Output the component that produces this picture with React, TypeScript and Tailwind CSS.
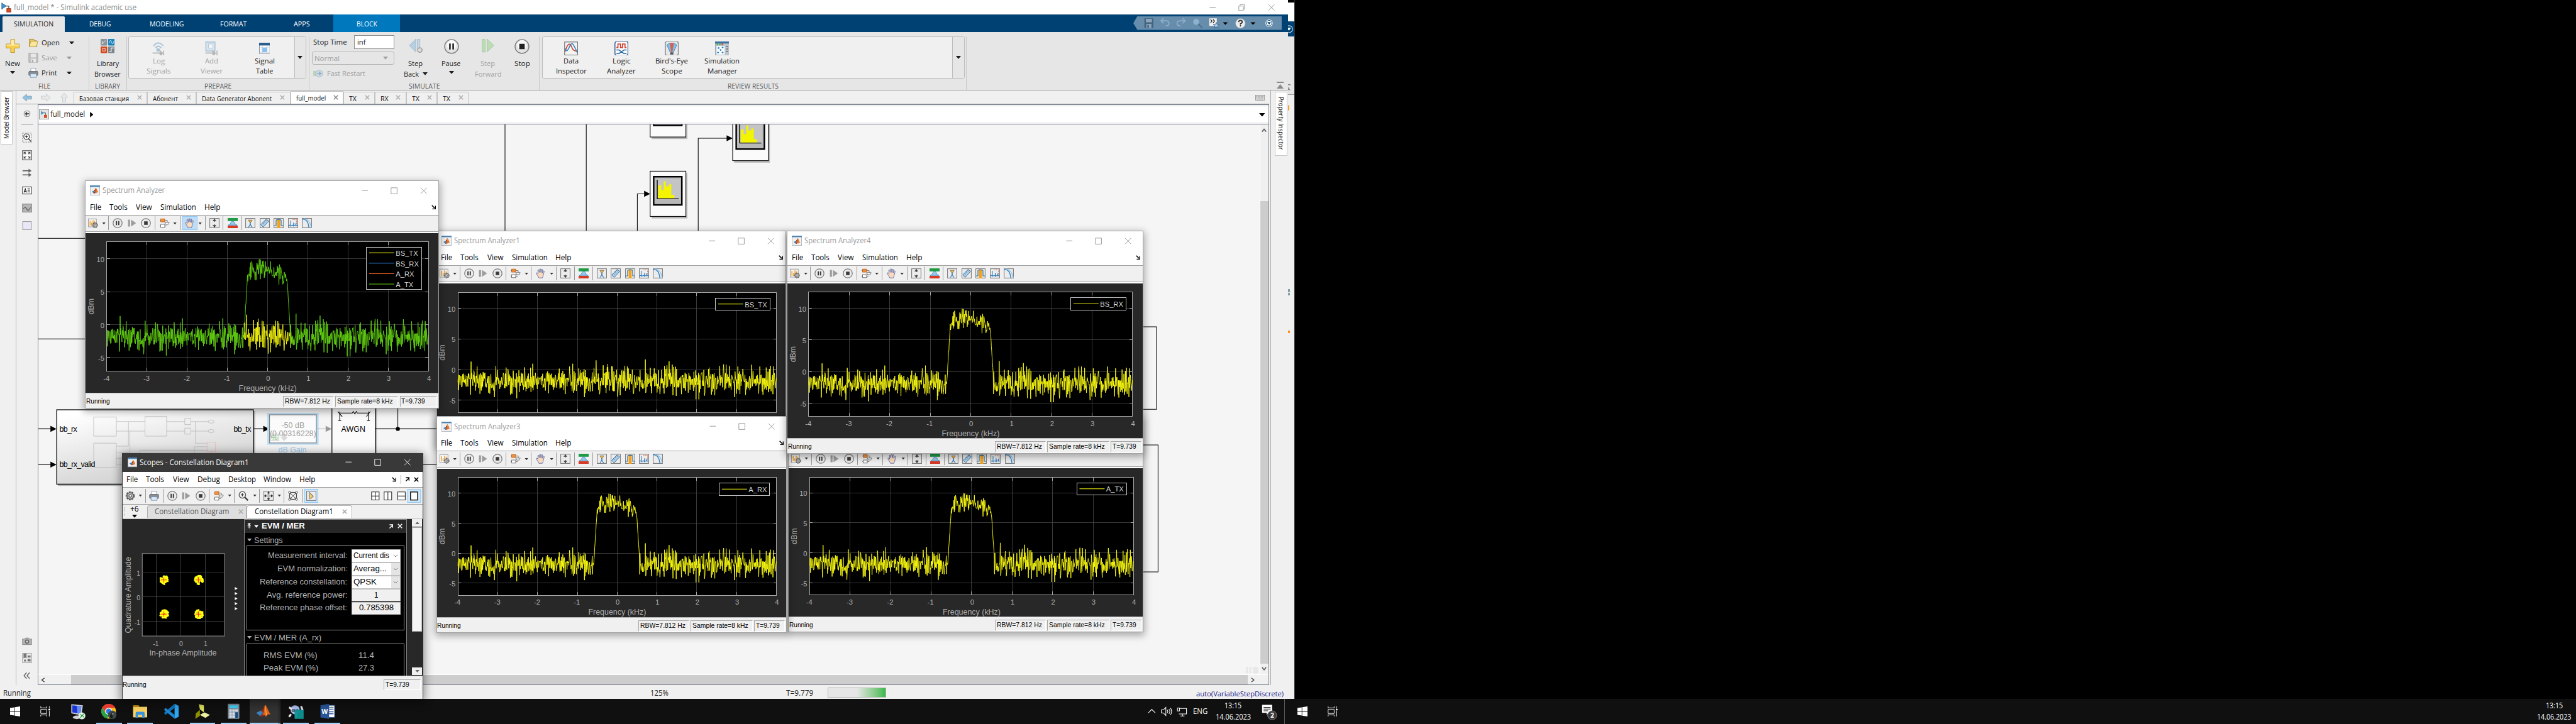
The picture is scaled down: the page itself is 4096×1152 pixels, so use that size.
import React, { useLayoutEffect, useRef } from "react";

/* ---------- text fitted to a fixed advance width ---------- */
function T({ c, v, children }: { c: string; v?: boolean; children: React.ReactNode }) {
  const outer = useRef<HTMLSpanElement>(null);
  const inner = useRef<HTMLSpanElement>(null);
  useLayoutEffect(() => {
    const o = outer.current;
    const i = inner.current;
    if (!o || !i) return;
    i.style.transform = "none";
    const a = i.getBoundingClientRect();
    const b = o.getBoundingClientRect();
    const natural = v ? a.height : a.width;
    const wanted = v ? b.height : b.width;
    if (natural > 0) i.style.transform = `scaleX(${wanted / natural})`;
  });
  return (
    <span ref={outer} className={`block shrink-0 whitespace-nowrap ${c}`}>
      <span ref={inner} className="inline-block origin-left">
        {children}
      </span>
    </span>
  );
}

/* ---------- small drawing helpers ---------- */
type K = { c?: string; children?: React.ReactNode };
const Svg = ({ c = "", children }: K) => (
  <svg viewBox="0 0 20 20" className={`block size-5 shrink-0 ${c}`}>
    {children}
  </svg>
);
const Tri = ({ c = "" }: K) => (
  <svg viewBox="0 0 10 6" className={`block h-[6px] w-[10px] shrink-0 fill-current ${c}`}>
    <path d="M0 0h10L5 6z" />
  </svg>
);
const Sep = ({ c = "" }: K) => <div className={`h-[27px] w-px shrink-0 bg-[#9a9a9a] ${c}`} />;

const MatlabMark = () => (
  <>
    <path d="M1 12l6-3 3 3-4 4z" fill="#3d7fb8" />
    <path d="M6 16l4-4-3-3c2-1 4-6 5-7l3 6-5 8-2 1z" fill="#8c2a1a" />
    <path d="M12 2c2 0 4 8 7 12-3-1-4 0-6 3-1-2-2-3-4-2 2-4 2-11 3-13z" fill="#e2621b" />
    <path d="M12 3c1 4 1 8 2 12" stroke="#f7b545" strokeWidth="1" fill="none" />
  </>
);
const WinLogo = ({ c = "" }: K) => (
  <Svg c={c}>
    <rect x=".5" y=".5" width="19" height="19" fill="#f0f0f0" stroke="#a8b0b8" />
    <rect x="0" y="0" width="20" height="3" fill="#4e86b4" />
    <g transform="translate(3 4) scale(.72)">
      <MatlabMark />
    </g>
  </Svg>
);
const SimLogo = ({ c = "" }: K) => (
  <Svg c={c}>
    <path d="M1 1l9 6-9 6z" fill="#3f97cf" stroke="#1f618f" />
    <path d="M10 7h5v5" stroke="#333" fill="none" strokeWidth="1.4" />
    <rect x="11" y="12" width="8" height="7" fill="#d64a22" stroke="#8b2c10" />
  </Svg>
);
const PauseI = ({ c = "" }: K) => (
  <Svg c={c}>
    <circle cx="10" cy="10" r="9" fill="#ececec" stroke="#7c7c7c" strokeWidth="1.6" />
    <path d="M6.5 6h2.4v8H6.5zM11 6h2.4v8H11z" fill="#3a3a3a" />
  </Svg>
);
const StopI = ({ c = "" }: K) => (
  <Svg c={c}>
    <circle cx="10" cy="10" r="9" fill="#ececec" stroke="#7c7c7c" strokeWidth="1.6" />
    <rect x="6.5" y="6.5" width="7" height="7" fill="#3a3a3a" />
  </Svg>
);
const StepI = ({ c = "" }: K) => (
  <Svg c={c}>
    <path d="M2 3h4v14H2zM8 3l10 7-10 7z" fill="#9c9c9c" />
  </Svg>
);
const BlocksI = ({ c = "" }: K) => (
  <Svg c={c}>
    <rect x="2" y="1.500" width="8" height="6" fill="#f0903a" stroke="#b75b12" />
    <path d="M0 4.500h2M10 4.500h5v4M14 15.500h-4M2 15.500H0" stroke="#555" fill="none" />
    <path d="M10 8.500h9l-2 4h-5z" fill="#fff" stroke="#555" />
    <rect x="2" y="12.500" width="8" height="6" fill="#fff" stroke="#555" />
  </Svg>
);
const HandI = () => (
  <Svg>
    <path
      d="M6 19C5 15 1 12 1 9.500c0-1.500 2-1 3.500 1.500L4 4c0-1.600 1.800-1.600 2 0l.8 4L7.500 2c.1-1.600 2-1.600 2.100 0l.4 6 1.200-5.500c.3-1.500 2-1.200 1.900.2L12.600 9l2.200-3.500c.8-1.300 2.300-.5 1.800 1L15 12.500c-.5 3-1 4-2 6.500z"
      fill="#fbd9bc"
      stroke="#5468a8"
      strokeWidth="1.100"
    />
  </Svg>
);
const Gear = ({ x, y, s = 1 }: { x: number; y: number; s?: number }) => (
  <g transform={`translate(${x} ${y}) scale(${s})`}>
    <circle r="4.800" fill="#b9b9b9" stroke="#5b5b5b" strokeWidth="1.600" strokeDasharray="2.2 1.200" />
    <circle r="3.800" fill="#c9c9c9" stroke="#666" />
    <circle r="1.600" fill="#fff" stroke="#555" />
  </g>
);
const ConfigI = ({ c = "" }: K) => (
  <Svg c={c}>
    <rect x=".5" y="1.500" width="16" height="16" fill="#f5f5f5" stroke="#8a8a8a" />
    <path d="M4 15V5M7 15V9M10 15V4M13 9V6" stroke="#f0a030" strokeWidth="1.800" />
    <Gear x={14} y={14} />
  </Svg>
);
const Framed = ({ c = "", children }: K) => (
  <Svg c={c}>
    <rect x=".75" y=".75" width="18.500" height="18.500" fill="#ececec" stroke="#777" strokeWidth="1.300" />
    {children}
  </Svg>
);
const PrinterI = ({ c = "" }: K) => (
  <Svg c={c}>
    <path d="M5 8V1h10v7" fill="#fff" stroke="#7a8ea5" />
    <rect x="1" y="7" width="18" height="8" rx="1.500" fill="#8a8f96" stroke="#55595f" />
    <path d="M4 12h12v7H4z" fill="#d8e9f8" stroke="#6c89a8" />
  </Svg>
);
const DockI = ({ c = "" }: K) => (
  <svg viewBox="0 0 10 10" className={`block size-[9px] shrink-0 ${c}`}>
    <path d="M1 1l6 6M9 2v7H2" stroke="currentColor" strokeWidth="2.200" fill="none" />
  </svg>
);
const UndockI = ({ c = "" }: K) => (
  <svg viewBox="0 0 10 10" className={`block size-[9px] shrink-0 ${c}`}>
    <path d="M2 9l6-6M2 1.500h7V8" stroke="currentColor" strokeWidth="2" fill="none" />
  </svg>
);
const XI = ({ c = "" }: K) => (
  <svg viewBox="0 0 10 10" className={`block shrink-0 ${c}`}>
    <path d="M1 1l8 8M9 1l-8 8" stroke="currentColor" strokeWidth="2" fill="none" />
  </svg>
);

const WinButtons = ({ c = "" }: K) => (
  <svg viewBox="0 0 130 14" className={`block h-[14px] w-[130px] shrink-0 ${c}`} fill="none" stroke="currentColor" strokeWidth="1.100">
    <path d="M.5 6.500h12M58.500 1h12v12h-12zM117.500 1l12 12M129.500 1l-12 12" />
  </svg>
);

/* ---------- spectrum data ---------- */
const N = 900;
let seed = 20230614;
const rnd = () => {
  seed = (seed * 1664525 + 1013904223) % 4294967296;
  return seed / 4294967296;
};
const PEAKS: [number, number][] = [
  [-3.67, 1.3], [-3.52, 0.5], [-2.12, 0.95], [-2.18, 0.3], [-1.12, 0.95], [-1.2, 0.5], [-0.53, 1.5], [-0.35, 0.7], [-0.24, 0.9],
  [0.19, 0.6], [0.25, 0.5], [0.71, 1.65], [0.93, 0.2], [1.3, 1.35], [2.58, 0.6], [2.67, 0.85], [2.74, 0.8], [2.82, 0.6], [3.03, 0.5],
  [3.38, 0.8], [3.58, 0.5], [3.85, 0.6], [-3.69, -4.1], [-3.08, -4.5], [-2.52, -4.7], [-1.3, -4], [-0.82, -4.5], [0.01, -4.4],
  [0.08, -4.2], [1.07, -4], [1.4, -4.2], [1.48, -4.3], [1.98, -4.85], [2.05, -4.85], [2.45, -4.2], [2.95, -4.5], [3.08, -4], [3.66, -4.1],
];
const FREQ = Array.from({ length: N }, (_, i) => -4 + (8 * i) / (N - 1));
const NOISE = FREQ.map(() => {
  const g = rnd() + rnd() + rnd() - 1.5;
  return -1.85 + g * 1.95;
});
PEAKS.forEach(([f, v]) => {
  NOISE[Math.round(((f + 4) / 8) * (N - 1))] = v;
});
const BUMP = FREQ.map((f, i) => {
  const a = Math.abs(f + 0.01);
  if (a > 0.575) return NOISE[i];
  const j = (rnd() + rnd() - 1) * 1.9;
  if (a > 0.5) return 6.4 - ((a - 0.5) / 0.075) * 7.5 + j * 0.3;
  if (a > 0.42) return 8 - ((a - 0.42) / 0.08) * 1.3 + j * 0.7;
  return 8.3 - (f > 0.1 ? 0.7 : 0) + j;
});

type Plot = { x0: number; x1: number; y0: number; y1: number; zero: number; unit: number };
type Series = "flat" | "bump" | "all";

function Spectrum({ box, p, series, legend, lx, ly, labels = true }: {
  box: [number, number, number, number];
  p: Plot;
  series: Series;
  legend: [string, string][];
  lx: [number, number];
  ly: [number, number];
  labels?: boolean;
}) {
  const X = (f: number) => p.x0 + ((f + 4) / 8) * (p.x1 - p.x0);
  const Y = (v: number) => p.zero - v * p.unit;
  const line = (d: number[], lo = -5, hi = 5) =>
    FREQ.map((f, i) => (f >= lo && f <= hi ? `${X(f).toFixed(1)},${Y(d[i]).toFixed(1)}` : "")).filter(Boolean).join(" ");
  const step = (ly[1] - ly[0]) / legend.length;
  return (
    <svg viewBox={box.join(" ")} preserveAspectRatio="none" className="block h-full w-full font-['Liberation_Sans',sans-serif]">
      <rect x={p.x0} y={p.y0} width={p.x1 - p.x0} height={p.y1 - p.y0} fill="#000" />
      <g stroke="#484848" strokeWidth="1" shapeRendering="crispEdges">
        {[-3, -2, -1, 0, 1, 2, 3].map((f) => <path key={f} d={`M${X(f)} ${p.y0}V${p.y1}`} />)}
        {[-5, 0, 5, 10].map((v) => <path key={v} d={`M${p.x0} ${Y(v)}H${p.x1}`} />)}
      </g>
      <g stroke="#afafaf" strokeWidth="1.200" fill="none" shapeRendering="crispEdges">
        <rect x={p.x0} y={p.y0} width={p.x1 - p.x0} height={p.y1 - p.y0} />
        {[-3, -2, -1, 0, 1, 2, 3].map((f) => <path key={f} d={`M${X(f)} ${p.y0}v7M${X(f)} ${p.y1}v-7`} />)}
        {[-5, 0, 5, 10].map((v) => <path key={v} d={`M${p.x0} ${Y(v)}h6M${p.x1} ${Y(v)}h-6`} />)}
      </g>
      {series === "all" && <polyline points={line(NOISE, -0.62, 0.62)} fill="none" stroke="#ffff11" strokeWidth="1.150" />}
      {series === "all" ? (
        <polyline points={line(BUMP)} fill="none" stroke="#64d413" strokeWidth="1.150" />
      ) : (
        <polyline points={line(series === "flat" ? NOISE : BUMP)} fill="none" stroke="#ffff11" strokeWidth="1.150" />
      )}
      <g fill="#afafaf" fontSize="14">
        {[-5, 0, 5, 10].map((v) => <text key={v} x={p.x0 - 5} y={Y(v) + 6.500} textAnchor="end">{v}</text>)}
        {labels && [-4, -3, -2, -1, 0, 1, 2, 3, 4].map((f) => (
          <text key={f} x={X(f) + (f < 0 ? -1 : 1)} y={p.y1 + 19} textAnchor="middle">{f}</text>
        ))}
        {labels && (
          <text x={(p.x0 + p.x1) / 2} y={p.y1 + 39} fontSize="15.500" textAnchor="middle" textLength="115" lengthAdjust="spacingAndGlyphs">
            Frequency (kHz)
          </text>
        )}
        <text transform={`translate(${p.x0 - 26} ${(p.y0 + p.y1) / 2}) rotate(-90)`} fontSize="15.500" textAnchor="middle">dBm</text>
      </g>
      <rect x={lx[0]} y={ly[0]} width={lx[1] - lx[0]} height={ly[1] - ly[0]} fill="#000" stroke="#e0e0e0" strokeWidth="1.100" shapeRendering="crispEdges" />
      {legend.map(([name, color], i) => {
        const y = ly[0] + step * (i + 0.5);
        return (
          <g key={name}>
            <path d={`M${lx[0] + 5.500} ${y}h50`} stroke={color} strokeWidth="1.250" />
            <text x={lx[0] + 58.500} y={y + 6} fontSize="14" fill="#d4d4d4">{name}</text>
          </g>
        );
      })}
    </svg>
  );
}

const Cell = ({ c, children }: { c: string; children: React.ReactNode }) => (
  <div className={`flex h-[22px] shrink-0 items-center border border-[#a9a9a9] border-r-white border-b-white pl-[2px] ${c}`}>{children}</div>
);

/* A window without a title shows an empty header; one without cells shows an empty status bar. */
function SpectrumWindow({ place, title, tw = "", hot, cells, children }: {
  place: string;
  title?: string;
  tw?: string;
  hot?: boolean;
  cells?: [string, string, string];
  children: React.ReactNode;
}) {
  return (
    <div className={`absolute flex flex-col border border-[#a2a2a2] bg-white shadow-[0_4px_14px_2px_rgba(0,0,0,0.32)] ${place}`}>
      <div className="flex h-[35px] shrink-0 items-center pt-[3px] pl-[9px] text-[15px] leading-none text-[#999]">
        {title && (
          <>
            <WinLogo />
            <T c={`ml-[5px] ${tw}`}>{title}</T>
            <WinButtons c="ml-auto mr-[23px] text-[#8f8f8f]" />
          </>
        )}
      </div>
      <div className="flex h-[33px] shrink-0 items-center border-b border-[#a0a0a0] pt-[2px] pl-[8px] text-[15px] leading-none text-black">
        {title && (
          <>
            <T c="w-[23px]">File</T>
            <T c="ml-[16px] w-[36px]">Tools</T>
            <T c="ml-[17px] w-[32px]">View</T>
            <T c="ml-[17px] w-[71px]">Simulation</T>
            <T c="ml-[16px] w-[32px]">Help</T>
            <DockI c="ml-auto mr-[5px]" />
          </>
        )}
      </div>
      <div className="flex h-[33px] shrink-0 items-center border-b border-[#a0a0a0] bg-[#f0f0f0] pl-[5px] text-[#333]">
        <ConfigI />
        <Tri c="ml-[7px] w-[8px]! h-[4px]!" />
        <Sep c="ml-[5px]" />
        <PauseI c="ml-[8px]" />
        <StepI c="ml-[8px]" />
        <StopI c="ml-[8px]" />
        <Sep c="ml-[7px]" />
        <BlocksI c="ml-[9px]" />
        <Tri c="ml-[7px] w-[8px]! h-[4px]!" />
        <Sep c="ml-[5px]" />
        <div className={`ml-[4px] flex h-[27px] w-[30px] shrink-0 items-center justify-center ${hot ? "border border-[#90c8f6] bg-[#bfdcf4]" : ""}`}>
          <HandI />
        </div>
        <Tri c="ml-[2px] w-[8px]! h-[4px]!" />
        <Sep c="ml-[5px]" />
        <Framed c="ml-[8px]">
          <path d="M10 1.500v6M10 12.500v6" stroke="#333" strokeWidth="1.500" />
          <path d="M6 6l4-4.500L14 6zM6 14l4 4.500 4-4.500z" fill="#444" />
        </Framed>
        <Sep c="ml-[7px]" />
        <Svg c="ml-[8px]">
          <rect width="20" height="7" fill="#1f9a45" />
          <rect y="6" width="20" height="9" fill="#eef4f8" />
          <path d="M1 14c5 0 5-8 9-8s4 8 9 8z" fill="#9cc7e8" stroke="#3a7db0" />
          <rect y="15" width="20" height="5" fill="#d83a26" />
        </Svg>
        <Sep c="ml-[7px]" />
        <Framed c="ml-[8px]">
          <path d="M6 4h8l-4 6z" fill="#f2b233" stroke="#555" strokeWidth=".8" />
          <path d="M10 8c0 5-1 8-4 10M10 8c0 5 1 8 4 10" stroke="#3c7fb5" fill="none" strokeWidth="1.500" />
        </Framed>
        <Framed c="ml-[8px]">
          <path d="M2 13L13 2l5 4L7 18z" fill="#a9d0ee" stroke="#41678a" strokeWidth="1.200" />
          <path d="M6 10l2 2M9 7l2 2M12 4l2 2" stroke="#2d4f6e" />
        </Framed>
        <Framed c="ml-[8px]">
          <rect x="7" y="2" width="6" height="18" fill="#f5a21b" />
          <path d="M1 15h4V5c0-2 3-2 5-2s5 0 5 2v10h4" stroke="#2d6ea5" fill="none" strokeWidth="1.500" />
        </Framed>
        <Framed c="ml-[8px]">
          <path d="M1 15l2-1 2 2V5v9l2 1 2-1 2 2V9l1 6 3-1 1-4v5l3-1" stroke="#2d7bbd" fill="none" strokeWidth="1.300" />
          <path d="M9 3h8v9" stroke="#d8492c" fill="none" strokeDasharray="2 1.500" />
        </Framed>
        <Framed c="ml-[8px]">
          <path d="M1 2c8 0 12 7 13 17" stroke="#2f82c4" fill="none" strokeWidth="1.800" />
          <path d="M4 1c8 1 13 8 15 18" stroke="#8fbfe4" fill="none" strokeWidth="1.500" />
        </Framed>
      </div>
      <div className="h-[2px] shrink-0 bg-white" />
      <div className="min-h-0 flex-1 bg-[#282828]">{children}</div>
      <div className="flex h-[30px] shrink-0 items-center border-t-2 border-[#b8b8b8] bg-[#f0f0f0] pt-[3px] pl-px pr-[3px] font-['Liberation_Sans',sans-serif] text-[14px] leading-none text-black">
        {cells && (
          <>
            <T c="w-[47px]">Running</T>
            <Cell c={`ml-auto ${cells[0]}`}><T c="w-[90px]">RBW=7.812 Hz</T></Cell>
            <Cell c={`ml-[3px] ${cells[1]}`}><T c="w-[111px]">Sample rate=8 kHz</T></Cell>
            <Cell c={`ml-[3px] ${cells[2]}`}><T c="w-[47px]">T=9.739</T></Cell>
          </>
        )}
      </div>
    </div>
  );
}

/* ---------- ribbon ---------- */
const Tall = ({ c, icon, children }: { c: string; icon: React.ReactNode; children: React.ReactNode }) => (
  <div className={`flex shrink-0 flex-col items-center leading-none ${c}`}>
    <div className="flex h-[30px] items-center">{icon}</div>
    {children}
  </div>
);
const Section = ({ c, label, children }: { c: string; label: React.ReactNode; children?: React.ReactNode }) => (
  <div className={`flex shrink-0 flex-col ${c}`}>
    <div className="mt-[8px] flex h-[92px] shrink-0 border-r border-[#c9c9c9]">{children}</div>
    <div className="flex h-[15px] items-center justify-center border-r border-[#c9c9c9] text-[13px] leading-none text-[#5c5c5c]">{label}</div>
  </div>
);
const Ico = ({ c = "", children }: K) => (
  <svg viewBox="0 0 28 28" className={`block size-7 shrink-0 ${c}`}>{children}</svg>
);
const RoundBtn = ({ pause }: { pause?: boolean }) => (
  <Ico c="size-[30px]!">
    <circle cx="14" cy="14" r="12.800" fill="#e4e4e4" stroke="#858585" strokeWidth="1.800" />
    <circle cx="14" cy="11" r="9" fill="#fafafa" />
    {pause ? <path d="M9.500 8.500h3v11h-3zM15.500 8.500h3v11h-3z" fill="#222" /> : <rect x="9" y="9" width="10" height="10" fill="#222" />}
  </Ico>
);

function Ribbon() {
  return (
    <div className="flex h-[116px] shrink-0 border-b border-[#a3a3a3] bg-[#e6e6e6] text-[14.5px] text-[#1c1c1c]">
      <Section c="w-[177px]" label={<T c="w-[24px]">FILE</T>}>
        <Tall c="ml-[5px] mt-[5px] w-[40px]" icon={<Ico><path d="M10 1h8v9h9v8h-9v9h-8v-9H1v-8h9z" fill="#f7cf4d" stroke="#b58a1c" /><path d="M11 2h6v9h9v2H2v-2h9z" fill="#fdeeb0" /></Ico>}>
          <T c="mt-[12px] w-[30px]">New</T>
          <Tri c="mt-[8px]" />
        </Tall>
        <div className="ml-[11px] mt-[-2px] flex flex-col leading-none">
          <div className="flex h-[30px] items-center">
            <Svg><path d="M2 3h9l1 3h5v12H2z" fill="#e9c565" stroke="#a3812d" /><path d="M5 7h14l-3 11H2z" fill="#fbe79b" stroke="#b08f38" /></Svg>
            <T c="ml-[7px] w-[36px]">Open</T>
            <Tri c="ml-[19px]" />
          </div>
          <div className="flex h-[30px] items-center text-[#9a9a9a]">
            <Svg><path d="M1 1h18v18H1z" fill="#c3c3c3" stroke="#a0a0a0" /><path d="M5 2h10v7H5zM5 12h10v7H5z" fill="#e8e8e8" /><path d="M7 14h3v5H7z" fill="#a8a8a8" /></Svg>
            <T c="ml-[7px] w-[31px]">Save</T>
            <Tri c="ml-[18px]" />
          </div>
          <div className="flex h-[30px] items-center">
            <PrinterI />
            <T c="ml-[7px] w-[31px]">Print</T>
            <Tri c="ml-[19px]" />
          </div>
        </div>
      </Section>
      <Section c="w-[75px]" label={<T c="w-[50px]">LIBRARY</T>}>
        <Tall c="mx-auto mt-[5px]" icon={
          <Ico>
            <rect x="0" y="0" width="13" height="13" rx="1" fill="#8c949b" /><path d="M3 10V4M3 10l7-7" stroke="#fff" fill="none" />
            <rect x="15" y="0" width="13" height="13" rx="1" fill="#1b84bd" /><path d="M17 8c2-8 4-5 5-1s3 3 4-2" stroke="#fff" fill="none" />
            <rect x="0" y="15" width="13" height="13" rx="1" fill="#d04a1f" /><rect x="4" y="19" width="5" height="5" stroke="#fff" fill="none" />
            <rect x="15" y="15" width="13" height="13" rx="1" fill="#7d858c" /><path d="M17 25h4v-7h5" stroke="#fff" fill="none" strokeWidth="1.500" />
          </Ico>}>
          <T c="mt-[12px] w-[44px]">Library</T>
          <T c="mt-[6px] w-[52px]">Browser</T>
        </Tall>
      </Section>
      <Section c="w-[363px]" label={<T c="w-[54px] mr-[-1px]">PREPARE</T>}>
        <div className="ml-[3px] flex h-[84px] w-[354px] rounded-[3px] border border-[#bcbcbc] bg-[#f0f0f0]">
          <Tall c="ml-[7px] mt-[8px] w-[105px] text-[#a3a3a3]" icon={<Ico><path d="M4 9c5-8 14-8 19 0M8 13c3-5 8-5 11 0" stroke="#a9c4d8" strokeWidth="2.500" fill="none" /><circle cx="13" cy="17" r="3.500" fill="#a9c4d8" /><path d="M2 23h15v-4l5 4.500-5 4.500v-4M24 18v10" stroke="#b5b5b5" fill="#b5b5b5" strokeWidth="2" /></Ico>}>
            <T c="mt-[2px] w-[24px]">Log</T>
            <T c="mt-[6px] w-[48px]">Signals</T>
          </Tall>
          <Tall c="mt-[8px] w-[105px] text-[#a3a3a3]" icon={<Ico><rect x="3" y="1" width="18" height="18" fill="#d8e5ee" stroke="#a9c4d8" strokeWidth="2" /><rect x="8" y="5" width="9" height="8" fill="#f5f5f5" stroke="#a9c4d8" /><path d="M2 23h15v-4l5 4.500-5 4.500v-4M25 18v10" stroke="#b5b5b5" fill="#b5b5b5" strokeWidth="2" /></Ico>}>
            <T c="mt-[2px] w-[26px]">Add</T>
            <T c="mt-[6px] w-[44px]">Viewer</T>
          </Tall>
          <Tall c="mt-[8px] w-[105px]" icon={<Svg c="size-[22px]!"><rect x=".5" y=".5" width="19" height="19" fill="#fff" stroke="#7f8b97" /><path d="M0 0h20v5H0z" fill="#2d5d8f" /><path d="M2 9h16M2 13h16M2 17h16M6 5v15M14 5v15" stroke="#b7c4d1" /><rect x="6" y="9" width="8" height="8" fill="#86bff0" /></Svg>}>
            <T c="mt-[2px] w-[40px]">Signal</T>
            <T c="mt-[6px] w-[34px]">Table</T>
          </Tall>
          <div className="ml-auto flex w-[23px] items-center justify-center border-l border-[#bcbcbc] bg-[#e6e6e6]"><Tri /></div>
        </div>
      </Section>
      <Section c="w-[458px]" label={<T c="w-[62px] mr-[-1px]">SIMULATE</T>}>
        <div className="ml-[5px] flex w-[164px] flex-col leading-none">
          <div className="mt-[-2px] flex h-[28px] items-center justify-between">
            <T c="ml-[2px] w-[67px]">Stop Time</T>
            <div className="flex h-[27px] w-[80px] items-center border-2 border-[#8f8f8f] bg-white pl-[5px]"><T c="w-[17px]">inf</T></div>
          </div>
          <div className="mt-[4px] flex h-[27px] items-center rounded-[4px] border border-[#b5b5b5] pl-[4px] text-[#a0a0a0]">
            <T c="w-[50px]">Normal</T>
            <Tri c="ml-auto mr-[11px]" />
          </div>
          <div className="mt-[7px] flex h-[20px] items-center pl-[2px] text-[#a0a0a0]">
            <Svg><rect x="0" y="5" width="8" height="10" fill="#bcd4b8" /><circle cx="12" cy="10" r="7" fill="#c8d8e4" stroke="#9fb5c5" /><path d="M8 10h7M12 7l3 3-3 3" stroke="#7d9db5" fill="none" strokeWidth="1.500" /></Svg>
            <T c="ml-[8px] w-[76px]">Fast Restart</T>
          </div>
        </div>
        <Tall c="ml-[10px] mt-[5px] w-[64px]" icon={<Ico><path d="M14 0v26L1 13z" fill="#b7cfde" stroke="#9ab5c6" /><path d="M17 0h5v19h-5z" fill="#c5d8e4" stroke="#9ab5c6" /><circle cx="22" cy="22" r="4.500" fill="#ddd" stroke="#a0a0a0" strokeWidth="2" /></Ico>}>
          <T c="mt-[12px] w-[29px]">Step</T>
          <div className="mt-[6px] flex items-center"><T c="w-[30px]">Back</T><Tri c="ml-[8px]" /></div>
        </Tall>
        <Tall c="ml-[7px] mt-[5px] w-[64px]" icon={<RoundBtn pause />}>
          <T c="mt-[12px] w-[38px]">Pause</T>
          <Tri c="mt-[8px]" />
        </Tall>
        <Tall c="ml-[9px] mt-[5px] w-[64px] text-[#a3a3a3]" icon={<Ico><path d="M2 1h6v25H2zM12 0l13 13-13 13z" fill="#bcdcb4" stroke="#a0bf98" /></Ico>}>
          <T c="mt-[12px] w-[29px]">Step</T>
          <T c="mt-[6px] w-[53px]">Forward</T>
        </Tall>
        <Tall c="ml-[4px] mt-[5px] w-[64px]" icon={<RoundBtn />}>
          <T c="mt-[12px] w-[31px]">Stop</T>
        </Tall>
      </Section>
      <Section c="w-[848px]" label={<T c="w-[101px]">REVIEW RESULTS</T>}>
        <div className="ml-[4px] flex h-[84px] w-[840px] rounded-[3px] border border-[#bcbcbc] bg-[#f0f0f0]">
          <Tall c="ml-[7px] mt-[8px] w-[100px]" icon={<Ico><rect x="1" y="1" width="26" height="26" fill="#f4f4f4" stroke="#707070" strokeWidth="1.500" /><path d="M2 20C8 0 12 4 15 11s5 8 11 8" stroke="#c83a2a" fill="none" strokeWidth="2" /><path d="M2 14c4 12 8-4 11-8s5-2 13 16" stroke="#3c86c0" fill="none" strokeWidth="2" /></Ico>}>
            <T c="mt-[2px] w-[30px]">Data</T>
            <T c="mt-[6px] w-[61px]">Inspector</T>
          </Tall>
          <Tall c="mt-[8px] w-[100px]" icon={<Ico><rect x="1" y="0" width="26" height="28" rx="4" fill="#fafafa" stroke="#2d5a92" strokeWidth="1.800" /><path d="M4 12h3V5h5v7h4V5h5v7h3" stroke="#d23a2a" fill="none" strokeWidth="2" /><path d="M4 17h5l10 7h5M4 24h5l10-7h5" stroke="#2d6ca8" fill="none" strokeWidth="1.800" /></Ico>}>
            <T c="mt-[2px] w-[36px]">Logic</T>
            <T c="mt-[6px] w-[57px]">Analyzer</T>
          </Tall>
          <Tall c="mt-[8px] w-[100px]" icon={<Ico><rect x="1" y="0" width="26" height="28" rx="4" fill="#e8e8e8" stroke="#808080" strokeWidth="1.800" /><path d="M4 7c5-5 15-5 20 0l-8 17h-4z" fill="#7fc0ea" stroke="#2d78b0" /><path d="M10 3h8l-3 20h-2z" fill="#d9604e" /><rect x="11" y="22" width="6" height="4" fill="#555" /></Ico>}>
            <T c="mt-[2px] w-[65px]">Bird&#39;s-Eye</T>
            <T c="mt-[6px] w-[41px]">Scope</T>
          </Tall>
          <Tall c="mt-[8px] w-[100px]" icon={<Ico><rect x="0" y="0" width="28" height="28" fill="#bcc4cb" stroke="#7b8794" /><path d="M0 0h28v4H0z" fill="#3c6ea0" /><path d="M3 5.500h3M8 5.500h3" stroke="#2ab04a" strokeWidth="3" /><path d="M13 5.500h3" stroke="#d8372a" strokeWidth="3" /><rect x="3" y="9" width="16" height="17" fill="#fff" /><g fill="#2484cc"><circle cx="7" cy="13" r="1.800" /><circle cx="15" cy="12" r="1.800" /><circle cx="11" cy="17" r="1.800" /><circle cx="6" cy="22" r="1.800" /><circle cx="15" cy="22" r="1.800" /></g><path d="M22 10h4M22 15h4M22 20h4" stroke="#667" strokeWidth="2" /></Ico>}>
            <T c="mt-[2px] w-[70px]">Simulation</T>
            <T c="mt-[6px] w-[59px]">Manager</T>
          </Tall>
          <div className="ml-auto flex w-[23px] items-center justify-center border-l border-[#bcbcbc] bg-[#e6e6e6]"><Tri /></div>
        </div>
      </Section>
      <svg viewBox="0 0 14 14" className="mt-[98px] mr-[8px] ml-auto block size-[14px] fill-[#8a8a8a]"><path d="M0 0h14v2.500H0zM7 5l7 9H0z" /></svg>
    </div>
  );
}

/* ---------- document tabs ---------- */
const Tab = ({ c, active, children }: { c: string; active?: boolean; children: React.ReactNode }) => (
  <div className={`flex shrink-0 items-center justify-between border border-[#c4c4c4] border-b-0 pt-[3px] pl-[10px] pr-[9px] leading-none ${active ? "h-[26px] bg-white" : "h-[24px] bg-[#f0f0f0]"} ${c}`}>
    {children}
    <XI c={`mb-[5px] size-[10px] ${active ? "text-[#8b8b8b]" : "text-[#b0b0b0]"}`} />
  </div>
);

const Arrow = ({ c, rot = "" }: { c: string; rot?: string }) => (
  <svg viewBox="0 0 20 16" className={`block h-[16px] w-[20px] ${c} ${rot}`}><path d="M1 8l8-7v4h10v6H9v4z" stroke="#8b9aa5" strokeWidth="1" /></svg>
);

/* ---------- block diagram ---------- */
const ScopeBlock = ({ x, y }: { x: number; y: number }) => (
  <g transform={`translate(${x} ${y})`}>
    <rect x="3" y="3" width="71" height="91" fill="#000" opacity=".25" />
    <rect width="71" height="90" fill="#fbfbfb" stroke="#000" strokeWidth="1.300" />
    <rect x="7" y="11" width="56" height="56" fill="#b8b8b8" stroke="#000" strokeWidth="3" />
    <rect x="11" y="15" width="48" height="42" fill="#c4c4c4" />
    <path d="M16 54V28h6v9h5V20h4v10h6v-4h5v21h6v7z" fill="#f4f400" />
    <path d="M14 17v38h43" stroke="#000" strokeWidth="1.800" fill="none" />
  </g>
);
const Head = ({ x, y, f = "#000" }: { x: number; y: number; f?: string }) => <path d={`M${x - 12} ${y - 6}L${x} ${y}l-12 6z`} fill={f} />;

const Diagram = () => (
  <svg viewBox="75 248 2427 1093" className="block h-[1093px] w-[2427px] shrink-0 bg-[#f5f5f5] font-['Liberation_Sans',sans-serif]">
    <defs>
      <linearGradient id="sub" x1="0" y1="0" x2=".5" y2="1">
        <stop offset=".1" stopColor="#ffffff" />
        <stop offset="1" stopColor="#cfcfcf" />
      </linearGradient>
    </defs>
    <g stroke="#000" strokeWidth="1.300" fill="none">
      <path d="M1002.500 248v220M1164 248v220M1265.500 470v-84h20M1386.500 470V275.500h60" />
      <path d="M75 474.500h100M75 674.500h100M75 853.500h25M75 924.500h25M503 853.500h25M745 853.500h125M789.500 853v-50M840 924.500h30" />
      <path d="M2270 650.500h27.500v164H2270M2270 885.500h30.500V1138H2270" />
    </g>
    <circle cx="789.500" cy="853.500" r="4" />
    <ScopeBlock x={1291} y={183} />
    <ScopeBlock x={1455} y={230} />
    <ScopeBlock x={1291} y={341} />
    <Head x={1455} y={275.5} />
    <Head x={1291} y={386} />
    <rect x="114" y="818" width="392" height="149" fill="#000" opacity=".25" />
    <rect x="111.500" y="815.500" width="391" height="148" fill="url(#sub)" stroke="#000" strokeWidth="1.600" />
    <g stroke="#b9b9b9" fill="none">
      <path d="M185 830h45v38h-45zM287 829h43v39h-43zM366 833h12v12h-12zM366 852h12v12h-12zM185 882h45v48h-45z" />
      <path d="M230 839h57M230 858h57M330 839h36M330 858h36M378 839h35M378 858h35M254 839v49h-24M257 858v42h-27M387 839v43h24M277 905v-9h134M385 905v-16h26M230 912h15M230 924h15" />
      <rect x="413" y="836" width="11" height="6" rx="3" />
      <rect x="413" y="855" width="11" height="6" rx="3" />
      <path d="M411 880h16v19h-16z" stroke="#eab5b5" />
    </g>
    <Head x={111} y={853.5} />
    <Head x={111} y={924.5} />
    <Head x={534} y={853.5} />
    <g fontSize="15.500" fill="#000">
      <text x="117" y="859" textLength="35">bb_rx</text>
      <text x="117" y="929" textLength="71">bb_rx_valid</text>
      <text x="463" y="859" textLength="35">bb_tx</text>
    </g>
    <rect x="530" y="822" width="102" height="63" fill="#b9dcf5" />
    <rect x="534.500" y="825.500" width="93" height="56" fill="#fbfbfb" stroke="#777" strokeWidth="1.300" />
    <rect x="537" y="864" width="16" height="13" fill="#ecf3ec" stroke="#bbb" />
    <path d="M560 863h7v7h4l-7.500 8-7.500-8h4z" fill="#d9d9d9" />
    <g fontSize="15.500" fill="#a0a0a0">
      <text x="558" y="852" textLength="46">-50 dB</text>
      <text x="535" y="868" textLength="92">(0.00316228)</text>
      <text x="538" y="876" fontSize="14" fill="#86b886">%</text>
      <text x="552" y="901" fill="#9fccec" textLength="56">dB Gain</text>
    </g>
    <path d="M628 853.500h18" stroke="#999" />
    <Head x={658} y={853.5} f="#999" />
    <rect x="661" y="803" width="87" height="180" fill="#000" opacity=".25" />
    <rect x="658.500" y="780" width="86" height="200" fill="#fbfbfb" stroke="#000" strokeWidth="1.500" />
    <path d="M670 819l9 10M674 819v18M671 837h6M735 819l-8 10M731 819v18M728 837h6M675 822h24l2-3 3 5 3-5 2 3h22" stroke="#000" fill="none" strokeWidth="1.300" />
    <text x="677" y="859" fontSize="15.500" textLength="48">AWGN</text>
    <path d="M2475 1327h4v13h-4zM2482 1327h4v13h-4zM2489 1327h11v13h-11z" fill="#e8e8e8" />
  </svg>
);

/* ---------- constellation window ---------- */
const BLOB = (cx: number, cy: number) =>
  Array.from({ length: 60 }, () => {
    const a = rnd() * Math.PI * 2;
    const r = Math.sqrt(rnd()) * 8.5;
    return [cx + Math.cos(a) * r, cy + Math.sin(a) * r] as [number, number];
  });
const CENTERS: [number, number][] = [[325, 1154], [393.5, 1154], [325, 1222], [393.5, 1222]];
const BLOBS = CENTERS.map(([x, y]) => BLOB(x + 1, y));

const Field = ({ label, w, children }: { label: string; w: string; children: React.ReactNode }) => (
  <div className="flex h-[26px] items-center justify-end pr-[6px]">
    <T c={`mr-[8px] ${w}`}>{label}</T>
    {children}
  </div>
);
const Combo = ({ w, text, lit }: { w: string; text: string; lit?: boolean }) => (
  <div className="flex h-[26px] w-[98px] items-center justify-between border border-[#c0c0c0] bg-white pl-[2px] text-black">
    <T c={w}>{text}</T>
    <div className={`flex h-full w-[18px] items-center justify-center ${lit ? "" : "bg-[#e4e4e4]"}`}>
      <svg viewBox="0 0 10 6" className="h-[6px] w-[10px]"><path d="M1 1l4 4 4-4" stroke="#555" fill="none" /></svg>
    </div>
  </div>
);
const ValueBox = ({ w, text }: { w: string; text: string }) => (
  <div className="flex h-[25px] w-[98px] items-center justify-center border border-[#c0c0c0] bg-[#f0f0f0] text-black"><T c={w}>{text}</T></div>
);

function ScopesWindow() {
  return (
    <div className="absolute top-[901px] left-[242px] flex h-[489px] w-[599px] flex-col border-x border-[#393939] bg-[#f0f0f0] shadow-[0_4px_18px_3px_rgba(0,0,0,0.45)]">
      <div className="flex h-[38px] shrink-0 items-center bg-[#393939] pl-[10px] text-[15px] leading-none text-white">
        <WinLogo c="size-[19px]!" />
        <T c="ml-[5px] w-[217px]">Scopes - Constellation Diagram1</T>
        <WinButtons c="ml-auto mr-[23px]" />
      </div>
      <div className="flex h-[31px] shrink-0 items-center border-b border-[#a0a0a0] bg-white pl-[8px] text-[15px] leading-none text-black">
        <T c="w-[23px]">File</T>
        <T c="ml-[16px] w-[36px]">Tools</T>
        <T c="ml-[17px] w-[32px]">View</T>
        <T c="ml-[17px] w-[45px]">Debug</T>
        <T c="ml-[16px] w-[55px]">Desktop</T>
        <T c="ml-[16px] w-[55px]">Window</T>
        <T c="ml-[16px] w-[32px]">Help</T>
        <DockI c="ml-auto" />
        <div className="mx-[8px] h-[18px] w-px bg-[#a0a0a0]" />
        <UndockI />
        <XI c="mr-[7px] ml-[9px] size-[10px]" />
      </div>
      <div className="flex h-[34px] shrink-0 items-center border-b border-[#a0a0a0] pl-[5px] text-[#333]">
        <Svg><Gear x={10} y={10} s={1.6} /></Svg>
        <Tri c="ml-[7px] w-[8px]! h-[4px]!" />
        <Sep c="ml-[5px]" />
        <PrinterI c="ml-[7px]" />
        <Sep c="ml-[7px]" />
        <PauseI c="ml-[8px]" />
        <StepI c="ml-[8px]" />
        <StopI c="ml-[8px]" />
        <Sep c="ml-[7px]" />
        <BlocksI c="ml-[9px]" />
        <Tri c="ml-[7px] w-[8px]! h-[4px]!" />
        <Sep c="ml-[5px]" />
        <Svg c="ml-[8px]"><circle cx="8" cy="8" r="6.500" fill="#f2f2f2" stroke="#555" strokeWidth="1.600" /><path d="M8 5v6M5 8h6" stroke="#333" strokeWidth="1.500" /><path d="M13 13l6 6" stroke="#444" strokeWidth="3" /></Svg>
        <Tri c="ml-[8px] w-[8px]! h-[4px]!" />
        <Sep c="ml-[5px]" />
        <Framed c="ml-[8px]"><path d="M10 3v14M3 10h14" stroke="#444" strokeWidth="1.500" /><path d="M10 1l3 4H7zM10 19l3-4H7zM1 10l4-3v6zM19 10l-4-3v6z" fill="#333" /><rect x="7" y="7" width="6" height="6" fill="#bbb" /></Framed>
        <Tri c="ml-[7px] w-[8px]! h-[4px]!" />
        <Sep c="ml-[5px]" />
        <Svg c="ml-[8px]"><path d="M3 3h14v14H3zM3 3l14 14M17 3L3 17" stroke="#333" fill="none" /><circle cx="10" cy="10" r="7" stroke="#333" fill="none" /><g fill="#fff" stroke="#222"><circle cx="3" cy="3" r="2" /><circle cx="17" cy="3" r="2" /><circle cx="3" cy="17" r="2" /><circle cx="17" cy="17" r="2" /></g></Svg>
        <Sep c="ml-[7px]" />
        <div className="ml-[4px] flex h-[27px] w-[28px] shrink-0 items-center justify-center border border-[#90c8f6] bg-[#cfe6f8]">
          <Framed><path d="M6 17V3l8 8-6 5" stroke="#777" fill="#f3c96b" strokeWidth="1.300" /></Framed>
        </div>
        <svg viewBox="0 0 100 28" className="mr-[2px] ml-auto block h-[28px] w-[100px] shrink-0" fill="none" stroke="#222" strokeWidth="1.300">
          <rect x="72.500" y="1" width="26" height="26" fill="#cfe6f8" stroke="#90c8f6" />
          <path d="M1 6h15v16H1zM8.500 6v16M1 14h15M26 6h15v16H26zM33.500 6v16M53 6h15v16H53zM53 14h15" fill="#fff" />
          <rect x="78.500" y="6" width="14" height="16" fill="#fff" stroke="#111" strokeWidth="1.800" />
        </svg>
      </div>
      <div className="flex h-[27px] shrink-0 items-end border-b border-[#a8a8a8] text-[15px] leading-none">
        <div className="ml-[4px] mb-[4px] h-[17px] w-px border-l border-dotted border-[#999]" />
        <div className="ml-[10px] flex w-[18px] flex-col items-center"><T c="w-[17px]">+6</T><Tri c="mt-[4px]" /></div>
        <div className="ml-[16px] flex h-[25px] w-[197px] items-center rounded-tl-[5px] border border-b-0 border-[#b0b0b0] bg-[#dedede] pl-[14px] text-[#555]">
          <T c="w-[148px]">Constellation Diagram</T>
          <XI c="ml-[18px] size-[10px] text-[#a8a8a8]" />
        </div>
        <div className="flex h-[25px] w-[210px] items-center rounded-t-[5px] border border-b-0 border-[#b0b0b0] bg-white pl-[15px] text-black">
          <T c="w-[156px]">Constellation Diagram1</T>
          <XI c="ml-[18px] size-[10px] text-[#a8a8a8]" />
        </div>
      </div>
      <div className="flex h-[313px] shrink-0 overflow-hidden border-t-2 border-white bg-[#282828]">
        <svg viewBox="243 1033 242 311" className="block h-[311px] w-[242px] shrink-0 font-['Liberation_Sans',sans-serif]">
          <rect x="282" y="1101.500" width="163.500" height="164" fill="#000" stroke="#afafaf" />
          <path d="M310.500 1102v163M359 1102v163M407.500 1102v163M282 1139.500h163M282 1188h163M282 1236.500h163" stroke="#484848" shapeRendering="crispEdges" />
          {BLOBS.map((b, i) => (
            <g key={i} fill="#ffff11">
              {b.map(([x, y], j) => <circle key={j} cx={x} cy={y} r="2" />)}
            </g>
          ))}
          {CENTERS.map(([x, y], i) => <path key={i} d={`M${x - 5.500} ${y}h11M${x} ${y - 5.500}v11`} stroke="#ff2a1a" strokeWidth="1.300" />)}
          <g fill="#afafaf" fontSize="13">
            <text x="278" y="1145" textAnchor="end">1</text>
            <text x="278" y="1194" textAnchor="end">0</text>
            <text x="278" y="1243" textAnchor="end">-1</text>
            <text x="309" y="1285" textAnchor="middle">-1</text>
            <text x="359" y="1285" textAnchor="middle">0</text>
            <text x="408" y="1285" textAnchor="middle">1</text>
            <text x="296" y="1304" fontSize="15" textLength="134" lengthAdjust="spacingAndGlyphs">In-phase Amplitude</text>
            <text transform="translate(259 1260) rotate(-90)" fontSize="15" textLength="152" lengthAdjust="spacingAndGlyphs">Quadrature Amplitude</text>
          </g>
          {[1171, 1181, 1191, 1201, 1211].map((y) => <path key={y} d={`M466 ${y - 3}l5.500 3-5.500 3z`} fill="#fff" />)}
        </svg>
        <div className="flex w-[324px] shrink-0 flex-col border border-b-0 border-[#8a8a8a] bg-black font-['Liberation_Sans',sans-serif] text-[16px] leading-none text-[#b4b4b4]">
          <div className="flex h-[26px] shrink-0 items-center bg-[#282828] text-white">
            <svg viewBox="0 0 8 12" className="ml-[5px] h-[12px] w-[8px]"><path d="M1 1h6M4 1v10M1 6l3-4 3 4M1 8h6" stroke="#fff" fill="none" strokeWidth="1.300" /></svg>
            <Tri c="ml-[5px] h-[9px]! w-[9px]!" />
            <T c="ml-[7px] w-[86px] font-bold">EVM / MER</T>
            <UndockI c="ml-auto" />
            <XI c="mr-[8px] ml-[9px] size-[10px]" />
          </div>
          <div className="mt-[6px] flex h-[20px] shrink-0 items-center pl-[5px]"><Tri c="h-[8px]! w-[9px]! mb-[3px]" /><T c="ml-[4px] w-[57px]">Settings</T></div>
          <div className="mx-[4px] flex h-[168px] shrink-0 flex-col border border-[#9a9a9a] pt-[6px]">
            <Field label="Measurement interval:" w="w-[158px]"><Combo w="w-[71px]" text="Current dis" lit /></Field>
            <Field label="EVM normalization:" w="w-[140px]"><Combo w="w-[66px]" text="Averag..." /></Field>
            <Field label="Reference constellation:" w="w-[174px]"><Combo w="w-[46px]" text="QPSK" /></Field>
            <Field label="Avg. reference power:" w="w-[161px]"><ValueBox w="w-[8px]" text="1" /></Field>
            <Field label="Reference phase offset:" w="w-[174px]"><ValueBox w="w-[69px]" text="0.785398" /></Field>
          </div>
          <div className="mt-[5px] flex h-[22px] shrink-0 items-center pl-[5px]"><Tri c="h-[8px]! w-[9px]! mb-[3px]" /><T c="ml-[4px] w-[134px]">EVM / MER (A_rx)</T></div>
          <div className="mx-[4px] flex flex-1 flex-col border border-b-0 border-[#9a9a9a] pt-[10px] pl-[32px]">
            <div className="flex h-[25px] items-center"><T c="w-[107px]">RMS EVM (%)</T><T c="ml-[82px] w-[31px]">11.4</T></div>
            <div className="flex h-[25px] items-center"><T c="w-[109px]">Peak EVM (%)</T><T c="ml-[80px] w-[31px]">27.3</T></div>
          </div>
        </div>
        <div className="ml-[10px] flex w-[20px] flex-col bg-[#282828] text-[#666]">
          <div className="flex h-[15px] items-center justify-center bg-[#f0f0f0]"><Tri c="rotate-180 h-[5px]! w-[9px]!" /></div>
          <div className="mt-px h-[208px] border border-[#bbb] bg-[#f4f4f4]" />
          <div className="mt-auto mb-[2px] flex h-[15px] items-center justify-center bg-[#f0f0f0]"><Tri c="h-[5px]! w-[9px]!" /></div>
        </div>
      </div>
      <div className="flex h-[35px] shrink-0 items-center border-t border-[#b0b0b0] pr-[4px] pl-px font-['Liberation_Sans',sans-serif] text-[14px] leading-none text-black">
        <T c="w-[47px]">Running</T>
        <Cell c="ml-auto w-[73px]"><T c="w-[47px]">T=9.739</T></Cell>
      </div>
    </div>
  );
}

/* ---------- taskbar ---------- */
const App32 = ({ c, on, children }: { c: string; on?: boolean; children: React.ReactNode }) => (
  <div className={`flex h-[50px] w-[51px] shrink-0 flex-col items-center ${c}`}>
    <svg viewBox="0 0 32 32" className="mt-[9px] block size-8">{children}</svg>
    {on && <div className="mt-auto h-[3px] w-full bg-[#9fd2fa]" />}
  </div>
);
const StartI = ({ c }: { c: string }) => (
  <svg viewBox="0 0 20 20" className={`block size-5 shrink-0 fill-white ${c}`}><path d="M0 3l8.500-1.200v7.700H0zM9.500 1.600L20 0v9.500H9.500zM0 10.500h8.500v7.700L0 17zM9.500 10.500H20V20L9.500 18.400z" /></svg>
);
const TaskViewI = ({ c }: { c: string }) => (
  <svg viewBox="0 0 20 20" className={`block size-5 shrink-0 ${c}`} fill="none" stroke="#fff" strokeWidth="1.200"><path d="M1 0v3h12V0M1 6h12v8H1zM1 20v-3h12v3M18 0v3M18 9v11" /><path d="M17 5h2v2.500h-2z" fill="#fff" /></svg>
);

function Taskbar() {
  return (
    <div className="flex h-[50px] w-[5120px] shrink-0 items-center bg-[#101010] text-[15px] leading-none text-white">
      <StartI c="ml-[20px]" />
      <TaskViewI c="ml-[40px]" />
      <App32 c="ml-[29px]">
        <path d="M3 2l23 2-3 20-20-4z" fill="#c9d0d8" /><path d="M5 4l18 2-2 15L5 18z" fill="#1a34d8" /><path d="M14 5l9 1-2 15-6-1z" fill="#6a8cf0" />
        <ellipse cx="14" cy="28" rx="8" ry="3.500" fill="#d0d0d0" /><circle cx="24" cy="25" r="7" fill="#e6efe6" /><path d="M21 22l3 3-3 4M28 21l-3 3 3 4" stroke="#2ea043" fill="none" strokeWidth="1.600" />
      </App32>
      <App32 c="ml-[11px]" on>
        <circle cx="16" cy="16" r="14.500" fill="#fbc116" /><path d="M16 16L3.500 8.500A14.500 14.500 0 0 1 29 9H16z" fill="#e33b2e" /><path d="M16 16l-2 14.500A14.500 14.500 0 0 1 3.400 8.700l6.500 11z" fill="#2aa148" /><path d="M3.500 8.500A14.500 14.500 0 0 1 29 9H16a7 7 0 0 0-6.500 9z" fill="#e33b2e" />
        <circle cx="16" cy="16" r="7" fill="#fff" /><circle cx="16" cy="16" r="5.500" fill="#2f7be8" /><circle cx="23" cy="23" r="8.500" fill="#3f4a4c" /><path d="M19 28c0-7 2-10 5-10s3 4 1 5-1 4-1 8" fill="#171b1c" /><circle cx="24" cy="21" r="2" fill="#7c8a86" />
      </App32>
      <App32 c="ml-[11px]" on>
        <path d="M2 4h11l2 3H2z" fill="#e0a30c" /><path d="M2 7h28v21H2z" fill="#fcd462" /><path d="M7 29v-9a3 3 0 0 1 3-3h12a3 3 0 0 1 3 3v9h-5v-6h-8v6z" fill="#3a93dc" />
      </App32>
      <App32 c="ml-[11px]">
        <path d="M22 1L1 19l3 4 18-14z" fill="#0f74bd" /><path d="M22 31L1 13l3-4 18 14z" fill="#1b86cf" /><path d="M22 1l8 4v22l-8 4z" fill="#2ea8f2" />
      </App32>
      <App32 c="ml-[11px]" on>
        <path d="M9 2l10 2v14l-8-6z" fill="#dbe15a" /><path d="M3 20l8-7v12L2 31z" fill="#8f9200" /><path d="M11 23l9-5 11 5-9 6z" fill="#eef0a0" />
      </App32>
      <App32 c="ml-[11px]" on>
        <rect x="4" y="1" width="23" height="30" rx="1.500" fill="#7e8c98" /><rect x="7" y="4" width="17" height="6" fill="#45d0f7" />
        <path d="M7 12h5v5H7zM13 12h5v5h-5zM19 12h5v5h-5zM7 18h5v5H7zM13 18h5v5h-5zM7 24h5v5H7zM13 24h5v5h-5z" fill="#d7dde2" /><path d="M19 18h5v11h-5z" fill="#114b85" />
      </App32>
      <div className="ml-[6px] flex h-[50px] w-[61px] shrink-0 bg-[#2b2b2b]">
        <div className="flex w-[56px] flex-col items-center bg-[#333]">
          <svg viewBox="0 0 20 20" className="mt-[9px] block size-8"><MatlabMark /></svg>
          <div className="mt-auto h-[3px] w-full bg-[#9fd2fa]" />
        </div>
        <div className="mt-auto h-[3px] w-[5px] bg-[#7ba3c4]" />
      </div>
      <App32 c="ml-[6px]" on>
        <circle cx="14" cy="13" r="9" fill="#aebff0" /><path d="M2 8l6 4M26 6l3 8M6 22l-4 5M15 22l2 6" stroke="#e8e8f4" strokeWidth="4" /><text x="7" y="17" fontSize="10" fontWeight="bold" fill="#223" className="font-['Liberation_Sans',sans-serif]">Git</text>
        <rect x="13" y="13" width="18" height="18" fill="#0f9494" opacity=".95" />
      </App32>
      <App32 c="ml-[11px]" on>
        <path d="M15 4h15v24H15z" fill="#fff" stroke="#2b5797" /><path d="M18 9h10M18 13h10M18 17h10M18 21h10" stroke="#2b5797" strokeWidth="1.800" /><path d="M2 4l17-3v30L2 28z" fill="#2a5699" />
        <text x="4" y="21.500" fontSize="13" fontWeight="bold" fill="#fff" className="font-['Open_Sans',sans-serif]">W</text>
      </App32>
      <svg viewBox="0 0 80 20" className="ml-[1605px] block h-5 w-20 shrink-0" fill="none" stroke="#fff" strokeWidth="1.300">
        <path d="M1 13l7-7 7 7M27 7h4l5-5v16l-5-5h-4zM39 7q2 3 0 6M42 5q4 5 0 10M45 3q5 7 0 14M62 4h15v11H62M69 15v4M65 19h8M59 3h4v6h-4z" />
      </svg>
      <T c="ml-[10px] w-[29px]">ENG</T>
      <div className="ml-[16px] flex w-[70px] shrink-0 flex-col items-center gap-[7px]"><T c="w-[34px]">13:15</T><T c="w-[70px]">14.06.2023</T></div>
      <svg viewBox="0 0 32 34" className="ml-[22px] mt-[2px] block h-[34px] w-[32px] shrink-0">
        <path d="M1 3h20v16h-7l-4 4v-4H1z" fill="#fff" /><path d="M4 8h14M4 11.500h14M4 15h9" stroke="#101010" strokeWidth="1.300" />
        <circle cx="21" cy="24" r="9" fill="#3a3a3a" stroke="#8a8a8a" /><text x="17.500" y="29" fontSize="13" fill="#fff" fontWeight="bold" className="font-['Open_Sans',sans-serif]">2</text>
      </svg>
      <div className="ml-[13px] h-full w-px bg-[#5a5a5a]" />
      <StartI c="ml-[25px]" />
      <TaskViewI c="ml-[40px]" />
      <div className="mr-[9px] ml-auto flex w-[68px] shrink-0 flex-col items-center gap-[7px]"><T c="w-[34px]">13:15</T><T c="w-[68px]">14.06.2023</T></div>
    </div>
  );
}

const Y = "#ffff11";

export default function App() {
  return (
    <div className="relative flex h-[1440px] w-[5120px] flex-col overflow-hidden bg-black font-['Open_Sans','Noto_Sans',sans-serif] [zoom:0.8]">
      <div className="flex h-[1390px] shrink-0">
        <div className="flex w-[2560px] shrink-0 flex-col bg-[#f0f0f0]">
          <div className="flex h-[29px] shrink-0 items-center bg-white pl-[2px] text-[15px] leading-none text-[#8c8c8c]">
            <SimLogo />
            <T c="ml-[5px] w-[244px]">full_model * - Simulink academic use</T>
            <svg viewBox="0 0 130 14" className="mr-[26px] ml-auto block h-[14px] w-[130px]" fill="none" stroke="#8c8c8c" strokeWidth="1.100">
              <path d="M.5 7h12M58.500 4.500h9v9h-9zM61 4.500v-3h9v9h-2.500M117.500 1.500l12 12M129.500 1.500l-12 12" />
            </svg>
          </div>
          <div className="flex h-[35px] shrink-0 items-end bg-[#004173] text-[14px] leading-none text-white">
            <div className="ml-[5px] flex h-[31px] w-[124px] items-center justify-center rounded-t-[2px] bg-[#e6e6e6] pb-[3px] text-[#2a2a2a]"><T c="w-[79px]">SIMULATION</T></div>
            <div className="flex h-[35px] w-[140px] items-center justify-center"><T c="w-[43px]">DEBUG</T></div>
            <div className="flex h-[35px] w-[124px] items-center justify-center"><T c="w-[68px]">MODELING</T></div>
            <div className="flex h-[35px] w-[141px] items-center justify-center"><T c="w-[53px]">FORMAT</T></div>
            <div className="flex h-[35px] w-[129px] items-center justify-center pl-[2px]"><T c="w-[32px]">APPS</T></div>
            <div className="flex h-[35px] w-[132px] items-center justify-center bg-[#0078be]"><T c="w-[41px]">BLOCK</T></div>
            <svg viewBox="0 0 295 27" className="mr-[12px] mb-[4px] ml-auto block h-[27px] w-[295px]">
              <path d="M8 0h287v27H8L0 13.500z" fill="#678dac" />
              <g transform="translate(22 4)"><path d="M0 0h18v19H0z" fill="#46647e" /><path d="M3 1h12v7H3zM4 11h10v8H4z" fill="#8aa5bd" /><path d="M6 13h3v6H6z" fill="#46647e" /></g>
              <path d="M60 4l-5 5 5 5M55 9h10q6 0 6 5t-7 5M98 4l5 5-5 5M103 9H93q-6 0-6 5t7 5" stroke="#8fafc9" fill="none" strokeWidth="2.200" />
              <circle cx="125" cy="11" r="6" fill="#8db2d0" stroke="#7da3c2" /><path d="M129 15l8 8" stroke="#4c7396" strokeWidth="3" />
              <path d="M151 4h15v15h-15z" fill="#f0f0f0" /><path d="M153.500 6l3 3.500-3 3.500M158.500 6l3 3.500-3 3.500" stroke="#222" fill="none" strokeWidth="1.600" /><path d="M165 12l1.600 4 4.400.2-3.400 2.800 1.200 4.200-3.800-2.400-3.800 2.400 1.200-4.200-3.400-2.800 4.400-.2z" fill="#a9cdea" stroke="#2f577c" />
              <path d="M178 12h10l-5 5z" fill="#000" />
              <circle cx="213" cy="14" r="9.500" fill="#eee" stroke="#9db0c0" />
              <path d="M209.500 11.500q0-3.500 3.500-3.500t3.500 3-3.500 3.500v2" stroke="#333" fill="none" strokeWidth="2.200" /><circle cx="213" cy="19" r="1.400" fill="#333" />
              <path d="M233 12h10l-5 5z" fill="#000" />
              <circle cx="270" cy="13.500" r="6.500" fill="#fff" stroke="#fff" strokeWidth="1.500" /><circle cx="270" cy="13.500" r="5.500" fill="#fff" stroke="#004173" strokeWidth="1.200" /><path d="M266.500 11.500h7l-3.500 5z" fill="#004173" />
            </svg>
          </div>
          <Ribbon />
          <div className="flex h-[1183px] shrink-0">
            <div className="w-[33px] shrink-0 border-r border-[#b8b8b8] pt-px pl-px">
              <div className="flex h-[107px] w-[24px] items-center justify-center border border-[#c8c8c8] bg-white">
                <div className="-rotate-90 text-[13.5px] leading-none text-black"><T v c="w-[84px]">Model Browser</T></div>
              </div>
            </div>
            <div className="flex w-[2490px] shrink-0 flex-col">
              <div className="flex h-[28px] shrink-0 items-end border-b border-[#9a9a9a] text-[13.5px] text-[#111]">
                <Arrow c="ml-[11px] mb-[4px] fill-[#8fc3e6]" />
                <Arrow c="ml-[17px] mb-[4px] fill-[#e4e4e4] opacity-50" rot="rotate-180" />
                <Arrow c="ml-[17px] mb-[4px] fill-[#e4e4e4] opacity-50" rot="rotate-90" />
                <Tab c="ml-[8px] w-[147px]"><T c="w-[99px]">Базовая станция</T></Tab>
                <Tab c="w-[97px]"><T c="w-[50px]">Абонент</T></Tab>
                <Tab c="w-[187px]"><T c="w-[139px]">Data Generator Abonent</T></Tab>
                <Tab c="w-[106px]" active><T c="w-[59px]">full_model</T></Tab>
                <Tab c="w-[62px]"><T c="w-[15px]">TX</T></Tab>
                <Tab c="w-[62px]"><T c="w-[16px]">RX</T></Tab>
                <Tab c="w-[62px]"><T c="w-[15px]">TX</T></Tab>
                <Tab c="w-[62px]"><T c="w-[15px]">TX</T></Tab>
                <svg viewBox="0 0 19 11" className="mr-[9px] mb-[7px] ml-auto block h-[11px] w-[19px]"><rect x=".5" y=".5" width="18" height="10" fill="#ddd" stroke="#888" /><path d="M2 3.500h15M2 6h15M4 8.500h11" stroke="#888" strokeDasharray="2 1" /></svg>
              </div>
              <div className="flex h-[1155px] shrink-0">
                <div className="flex w-[42px] shrink-0 flex-col items-center text-[#555]">
                  <Svg c="mt-[8px]"><circle cx="10" cy="10" r="6" fill="#eee" stroke="#888" strokeWidth="1.300" /><path d="M14 10H8M10 7l-3 3 3 3" stroke="#333" fill="none" strokeWidth="1.800" /></Svg>
                  <div className="mt-[12px] h-px w-[24px] bg-[#aaa]" />
                  <Svg c="mt-[15px]"><path d="M1 1h18v18H1z" stroke="#777" fill="none" strokeDasharray="3 2" /><circle cx="9" cy="8" r="5.500" fill="#fff" stroke="#444" strokeWidth="1.500" /><path d="M9 5.500v5M6.500 8h5M13 12l5 6" stroke="#333" strokeWidth="1.800" /></Svg>
                  <Svg c="mt-[15px]"><rect x="1" y="1" width="18" height="18" fill="#fff" stroke="#555" strokeWidth="1.500" /><path d="M4 8V4h4M12 4h4v4M16 12v4h-4M8 16H4v-4M4 4l4 4M16 4l-4 4M16 16l-4-4M4 16l4-4" stroke="#444" fill="none" strokeWidth="1.400" /></Svg>
                  <Svg c="mt-[15px]"><path d="M1 6h15M1 14h15" stroke="#555" strokeWidth="1.800" /><path d="M13 2l6 4-6 4zM13 10l6 4-6 4z" fill="#666" /></Svg>
                  <Svg c="mt-[15px]"><rect x="1" y="3" width="18" height="14" fill="#fff" stroke="#555" strokeWidth="1.500" /><path d="M4 14l2.500-7L9 14M5 12h3M11 7h5M11 10h5M11 13h5" stroke="#222" fill="none" strokeWidth="1.500" /></Svg>
                  <Svg c="mt-[15px]"><rect x="1" y="2" width="18" height="16" fill="#b5b5b5" stroke="#888" strokeWidth="1.500" /><path d="M3 12c3-7 5-2 7 1s4 1 7-4" stroke="#555" fill="none" strokeWidth="1.500" /></Svg>
                  <Svg c="mt-[15px]"><rect x="1.500" y="2" width="17" height="16" fill="#e8e8f8" stroke="#9a9a9a" strokeWidth="1.300" /></Svg>
                  <Svg c="mt-auto"><path d="M1 6h5l1-2h6l1 2h5v11H1z" fill="#b4b4b4" stroke="#777" /><circle cx="10" cy="11" r="4.200" fill="#666" /><circle cx="10" cy="11" r="2" fill="#ddd" /></Svg>
                  <Svg c="mt-[14px]"><rect x="1" y="1" width="18" height="18" fill="#eee" stroke="#888" /><path d="M3 1h6v10l-3-2-3 2zM11 5h6v4h-6zM11 12h6v5h-6zM4 13h4v4H4z" fill="#777" /></Svg>
                  <Svg c="mt-[15px] mb-[9px]"><path d="M9 4l-5 6 5 6M15 4l-5 6 5 6" stroke="#666" fill="none" strokeWidth="1.800" /></Svg>
                </div>
                <div className="flex w-[2448px] shrink-0 flex-col border-x border-[#808595]">
                  <div className="flex h-[40px] shrink-0 items-center border-t border-b-2 border-[#808595] bg-white text-[15px] leading-none text-[#222] shadow-[inset_0_3px_0_#f0f0f0,inset_0_-3px_0_#f0f0f0]">
                    <Svg c="ml-[1px]"><rect x=".5" y=".5" width="19" height="19" fill="#e4e4e4" stroke="#888" /><path d="M4 3l6 4-6 4z" fill="#3f97cf" /><path d="M9 7h4v4" stroke="#333" fill="none" /><rect x="10" y="11" width="6" height="6" fill="#d64a22" /></Svg>
                    <T c="ml-[3px] w-[69px]">full_model</T>
                    <svg viewBox="0 0 6 10" className="ml-[9px] block h-[11px] w-[7px] shrink-0 fill-black"><path d="M0 0l6 5-6 5z" /></svg>
                    <Tri c="mr-[7px] ml-auto h-[7px]! w-[12px]! text-black" />
                  </div>
                  <div className="flex h-[1093px] shrink-0">
                    <Diagram />
                    <div className="flex flex-1 flex-col items-center border-l border-white bg-[#f0f0f0]">
                      <svg viewBox="0 0 10 8" className="mt-[7px] h-[8px] w-[10px]"><path d="M1 7l4-5 4 5" stroke="#555" fill="none" strokeWidth="2" /></svg>
                      <div className="mt-[137px] h-[920px] w-full bg-[#cdcdcd]" />
                      <svg viewBox="0 0 10 8" className="mt-[6px] h-[8px] w-[10px]"><path d="M1 1l4 5 4-5" stroke="#555" fill="none" strokeWidth="2" /></svg>
                    </div>
                  </div>
                  <div className="flex h-[22px] shrink-0 items-center border-t border-b border-t-white border-b-[#808595] bg-[#f0f0f0]">
                    <svg viewBox="0 0 8 10" className="ml-[5px] h-[10px] w-[8px]"><path d="M7 1L2 5l5 4" stroke="#444" fill="none" strokeWidth="1.800" /></svg>
                    <div className="ml-[52px] h-full w-[2339px] bg-[#cdcdcd]" />
                    <svg viewBox="0 0 8 10" className="ml-[6px] h-[10px] w-[8px]"><path d="M1 1l5 4-5 4" stroke="#444" fill="none" strokeWidth="1.800" /></svg>
                  </div>
                </div>
              </div>
            </div>
            <div className="ml-[2px] w-[35px] shrink-0 border-l border-[#a8a8a8] pt-[2px] pl-[7px]">
              <div className="flex h-[128px] w-[25px] items-center justify-center border border-[#c8c8c8] bg-white">
                <div className="rotate-90 text-[13.5px] leading-none text-black"><T v c="w-[106px]">Property Inspector</T></div>
              </div>
            </div>
          </div>
          <div className="flex h-[27px] shrink-0 items-center bg-[#f0f0f0] pt-[5px] pl-[6px] text-[15px] leading-none text-[#222]">
            <T c="w-[55px]">Running</T>
            <T c="ml-[1232px] w-[36px]">125%</T>
            <T c="ml-[234px] w-[54px]">T=9.779</T>
            <div className="mb-[4px] ml-[28px] h-[20px] w-[116px] border border-[#b5b5b5] bg-linear-to-r from-[#e6e6e6] from-50% to-[#35b84b]" />
            <T c="mr-[8px] ml-auto w-[174px] text-[14px] text-[#1c1c8c]">auto(VariableStepDiscrete)</T>
          </div>
        </div>
        <div className="flex w-[14px] shrink-0 flex-col border-r border-[#2a2a2a] pt-[5px]">
          <div className="h-[38px] bg-white" />
          <div className="flex h-[30px] items-center bg-[#004173]">
            <svg viewBox="0 0 12 16" className="h-4 w-3"><circle cx="2" cy="8" r="7" fill="none" stroke="#cfe0ee" strokeWidth="1.500" /><path d="M-3 5h9l-4 6z" fill="#fff" /></svg>
          </div>
          <div className="flex h-[116px] flex-col justify-end border-b border-[#9a9a9a] bg-[#e6e6e6] pb-[8px]">
            <svg viewBox="0 0 6 12" className="h-[12px] w-[6px] fill-[#8a8a8a]"><path d="M0 0h5v2H0zM0 5l5 7H0z" /></svg>
          </div>
          <div className="flex-1 bg-[#f0f0f0] pt-[20px]">
            <div className="h-[11px] w-[3px] rounded-r-full bg-[#f7a21d]" />
            <div className="mt-[355px] h-[6px] w-[4px] bg-[#85a0a0]" />
            <div className="mt-[2px] h-[5px] w-[4px] bg-[#85a0a0]" />
            <div className="mt-[70px] h-[5px] w-[4px] bg-[#f7941d]" />
          </div>
        </div>
      </div>
      <Taskbar />

      <SpectrumWindow place="left-[1566px] top-[827px] w-[707px] h-[431px]" cells={["w-[101px]", "w-[123px]", "w-[61px]"]}>
        <Spectrum box={[1567, 932, 705, 295]} p={{ x0: 1609, x1: 2253, y0: 950.5, y1: 1183.5, zero: 1100, unit: 11.92 }} series="bump" legend={[["A_TX", Y]]} lx={[2140, 2239.5]} ly={[961, 984.5]} />
      </SpectrumWindow>
      <SpectrumWindow place="left-[867px] top-[459px] w-[696px] h-[430px]" title="Spectrum Analyzer1" tw="w-[131px]">
        <Spectrum box={[868, 564, 694, 294]} p={{ x0: 909.5, x1: 1543, y0: 582.5, y1: 820, zero: 735, unit: 12.17 }} series="flat" legend={[["BS_TX", Y]]} lx={[1421.5, 1530]} ly={[593.5, 616.5]} labels={false} />
      </SpectrumWindow>
      <SpectrumWindow place="left-[867px] top-[828px] w-[697px] h-[431px]" title="Spectrum Analyzer3" tw="w-[132px]" cells={["w-[101px]", "w-[123px]", "w-[61px]"]}>
        <Spectrum box={[868, 933, 695, 295]} p={{ x0: 909.5, x1: 1543, y0: 950, y1: 1184, zero: 1100.5, unit: 11.9 }} series="bump" legend={[["A_RX", Y]]} lx={[1429, 1529.5]} ly={[961, 985.5]} />
      </SpectrumWindow>
      <SpectrumWindow place="left-[1564px] top-[459px] w-[709px] h-[444px]" title="Spectrum Analyzer4" tw="w-[132px]" cells={["w-[101px]", "w-[123px]", "w-[61px]"]}>
        <Spectrum box={[1565, 564, 707, 308]} p={{ x0: 1607.5, x1: 2251.5, y0: 580.5, y1: 828.5, zero: 739, unit: 12.55 }} series="bump" legend={[["BS_RX", Y]]} lx={[2128.5, 2239]} ly={[592.5, 616.5]} />
      </SpectrumWindow>
      <SpectrumWindow place="left-[169px] top-[359px] w-[704px] h-[454px]" title="Spectrum Analyzer" tw="w-[124px]" hot cells={["w-[101px]", "w-[125px]", "w-[74px]"]}>
        <Spectrum
          box={[170, 464, 702, 318]}
          p={{ x0: 212.5, x1: 852, y0: 480.5, y1: 738.5, zero: 645.5, unit: 13.08 }}
          series="all"
          legend={[["BS_TX", Y], ["BS_RX", "#2d8ceb"], ["A_RX", "#ff6929"], ["A_TX", "#64d413"]]}
          lx={[728.5, 839]}
          ly={[492.5, 575.5]}
        />
      </SpectrumWindow>
      <ScopesWindow />
    </div>
  );
}
